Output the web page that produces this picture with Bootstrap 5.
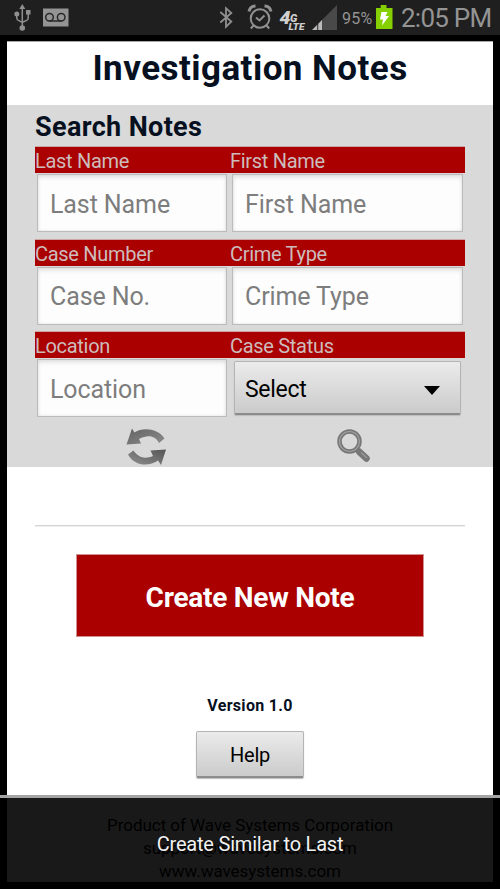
<!DOCTYPE html>
<html lang="en">
<head>
<meta charset="utf-8">
<meta name="viewport" content="width=device-width, initial-scale=1">
<title>Investigation Notes</title>
<link href="https://cdn.jsdelivr.net/npm/bootstrap@5.3.0/dist/css/bootstrap.min.css" rel="stylesheet">
<style>
body{font-family:Roboto,"Liberation Sans",sans-serif;background:#000;width:500px;height:889px;color:#000}
.screen{height:889px}
.status{height:35px;background:#1f1f1f;color:#949494}
.status svg{flex:none;display:block}
.pct{font-size:16px;line-height:35px;letter-spacing:.3px;width:32px;margin-left:2px;padding-top:1px;white-space:nowrap}
.clock{font-size:26px;line-height:35px;margin-left:8px;letter-spacing:-.75px;padding-top:1px;white-space:nowrap}
.sheet{margin:6px 7px 0;height:841px;background:#fff;border-top:1px solid #aaa}
.title{height:63px;line-height:53px;font-size:35px;font-weight:700;color:#07101f;letter-spacing:.46px}
.search{height:362px;background:#d9d9d9;padding:0 28px}
.search h2{font-size:27px;line-height:42px;height:42px;font-weight:700;color:#07101f;margin:0;padding-top:1px;letter-spacing:.35px}
.strip{height:26px;background:#a00;color:#cdbcbc;font-size:20px;line-height:28px;letter-spacing:-.3px;box-shadow:0 -1px 0 #cda5a5}
.col-a{width:195px}.col-b{width:235px}
.group{height:92.5px}
.field{height:58px;margin:1px 2px 0;border:1px solid #bbb;border-radius:0;background:#fdfdfd;box-shadow:inset 0 3px 5px -1px #ddd,inset 0 0 3px #ddd;padding:2px 11px 0 12px;font-size:25px;line-height:54px;letter-spacing:-.1px;color:#333}
.col-a .field{width:190px}.col-b .field{width:231px}
.field::placeholder{color:#7d7d7d;opacity:1}
.grad{background:linear-gradient(#ebebeb,#cbcbcb);border:1px solid #b4b4b4;border-bottom:2px solid #8c8c8c;border-radius:2px;color:#000;box-shadow:0 1px 1px #bbb}
.pick{width:227px;height:54px;margin:3px 0 0 4px;padding:6px 20px 0 10px;font-size:23px;letter-spacing:-.3px}
.tools{height:50px}
.rule{height:1px;background:#d4d4d4;margin:58px 28px 28px;box-shadow:0 1px 0 #eee}
.create{width:348px;height:83px;background:#a00;color:#fff;border:1px solid #d29090;border-radius:0;font-size:28px;font-weight:700;padding:5px 0 0;letter-spacing:-.25px}
.version{font-size:16px;line-height:20px;font-weight:700;color:#07101f;margin-top:59px;letter-spacing:.3px}
.help{width:108px;height:47px;font-size:20px;margin-top:15px;padding:2px 0 0;letter-spacing:-.2px}
.foot{font-size:17px;line-height:23px;margin-top:36px;letter-spacing:-.04px}
.menu{left:0;right:0;bottom:0;height:94px;background:rgba(0,0,0,.9);border-top:3px solid #a4a4a4;color:#f2f2f2;font-size:20px;letter-spacing:-.2px;padding-top:1px;text-shadow:0 1px 2px #000;background-clip:padding-box}
</style>
<script src="https://cdn.jsdelivr.net/npm/bootstrap@5.3.0/dist/js/bootstrap.bundle.min.js"></script>
</head>
<body class="overflow-hidden">
<div class="screen position-relative overflow-hidden">
  <header class="status d-flex align-items-center">
    <svg width="340" height="35" viewBox="0 0 340 35" fill="none" stroke="#909090" stroke-width="1.5">
      <g><path d="M22.3 27V8M16.8 14v4q0 2 2 2.6l3.500 1.700M28.2 13v5q0 2-2 2.600l-3.700 1.600"/><path d="M22.3 4l3 5h-6z" fill="#909090" stroke="none"/><circle cx="22.3" cy="28" r="2.8" fill="#909090" stroke="none"/><circle cx="16.8" cy="14" r="2.5" fill="#909090" stroke="none"/><path d="M26 10h4.500v4.500H26z" fill="#909090" stroke="none"/></g>
      <path d="M43 8.500h25.500v18H43z" fill="#949494" stroke="none"/><g stroke="#292929"><circle cx="49.500" cy="17.200" r="3.800"/><circle cx="61.200" cy="17.200" r="3.800"/><path d="M49.500 21h11.700"/></g>
      <path d="M220.300 12l11 9.500-5.300 5.300V8.200l5.300 4.800-11 9.500" stroke-width="1.800"/>
      <circle cx="260" cy="18.500" r="9.300" stroke-width="2"/><path d="M256 17.500l3.500 3 5-5M253.500 25.500l-2.700 3M266.500 25.500l2.700 3" stroke-width="2"/><path d="M249 11.500q1-5.500 6.500-5.500M271 11.500q-1-5.500-6.500-5.500" stroke-width="3"/>
      <g fill="#cfcfcf" stroke="none" font-family="Roboto,sans-serif" font-weight="900" font-style="italic"><text x="279.500" y="23.500" font-size="18" textLength="11" lengthAdjust="spacingAndGlyphs">4</text><text x="290" y="21.500" font-size="11">G</text><text x="288.500" y="29.500" font-size="9.500" textLength="16" lengthAdjust="spacingAndGlyphs">LTE</text></g>
      <g stroke="none"><path d="M337 5v25h-25z" fill="#494949"/><path d="M317 25v5h-5zM322 20v10h-3.700V23.700z" fill="#b9b9b9"/></g>
    </svg>
    <span class="pct">95%</span>
    <svg width="19" height="35" viewBox="0 0 19 35"><path d="M2 8h4.700V5h5.800V8H18.500V29H2z" fill="#86cf00"/><path d="M7.500 12h6l-2 4h3.500L8 25.500l1-6H6z" fill="#fff"/></svg>
    <span class="clock">2:05 PM</span>
  </header>
  <main class="sheet">
    <h1 class="title text-center mb-0">Investigation Notes</h1>
    <section class="search">
      <h2>Search Notes</h2>
      <div class="group">
        <div class="strip d-flex"><label class="col-a" for="last">Last Name</label><label class="col-b" for="first">First Name</label></div>
        <div class="d-flex"><div class="col-a"><input id="last" class="field form-control" placeholder="Last Name"></div><div class="col-b"><input id="first" class="field form-control" placeholder="First Name"></div></div>
      </div>
      <div class="group">
        <div class="strip d-flex"><label class="col-a" for="number">Case Number</label><label class="col-b" for="crime">Crime Type</label></div>
        <div class="d-flex"><div class="col-a"><input id="number" class="field form-control" placeholder="Case No."></div><div class="col-b"><input id="crime" class="field form-control" placeholder="Crime Type"></div></div>
      </div>
      <div class="group">
        <div class="strip d-flex"><label class="col-a" for="place">Location</label><span class="col-b">Case Status</span></div>
        <div class="d-flex"><div class="col-a"><input id="place" class="field form-control" placeholder="Location"></div><div class="col-b"><button class="grad pick d-flex align-items-center justify-content-between" type="button">Select<svg width="16" height="9" viewBox="0 0 16 9"><path d="M0 0h16L8 9z"/></svg></button></div></div>
      </div>
      <div class="tools d-flex">
        <svg width="430" height="42" viewBox="35 423.500 430 42">
          <defs><linearGradient id="steel" x1="0" y1="0" x2="1" y2="1"><stop offset="0" stop-color="#626262"/><stop offset=".5" stop-color="#777"/><stop offset="1" stop-color="#8c8c8c"/></linearGradient><linearGradient id="steel2" x1="0" y1="1" x2="1" y2="0"><stop offset="0" stop-color="#909090"/><stop offset="1" stop-color="#555"/></linearGradient></defs>
          <path d="M132 427l2.500 4C143 425.500 158 427 164.500 437l-5.500 4.500C155 434 148 433 139 437.500l2 4.500-14.500 1z" fill="url(#steel)"/>
          <path d="M161 463.500l-3-4.500C148 466 134 464 128 453l5.500-4C138 456 145 458 153 454.500l-2.500-5.500 15.500-1z" fill="url(#steel2)"/>
          <path d="M359 450l7.500 7" stroke="#777" stroke-width="6.500" stroke-linecap="round"/><path d="M361 451l6 5.500" stroke="#999" stroke-width="1.500"/>
          <circle cx="349.500" cy="440" r="10" fill="none" stroke="#777" stroke-width="4.500"/><circle cx="349.500" cy="440" r="10" fill="none" stroke="#a2a2a2" stroke-width="1.200"/>
        </svg>
      </div>
    </section>
    <div class="rule"></div>
    <div class="text-center">
      <button class="create btn d-block mx-auto" type="button">Create New Note</button>
      <div class="version">Version 1.0</div>
      <button class="grad help d-block mx-auto" type="button">Help</button>
      <div class="foot">Product of Wave Systems Corporation<br>support@wavesystems.com<br>www.wavesystems.com</div>
    </div>
  </main>
  <div class="menu position-absolute d-flex align-items-center justify-content-center">Create Similar to Last</div>
</div>
</body>
</html>
